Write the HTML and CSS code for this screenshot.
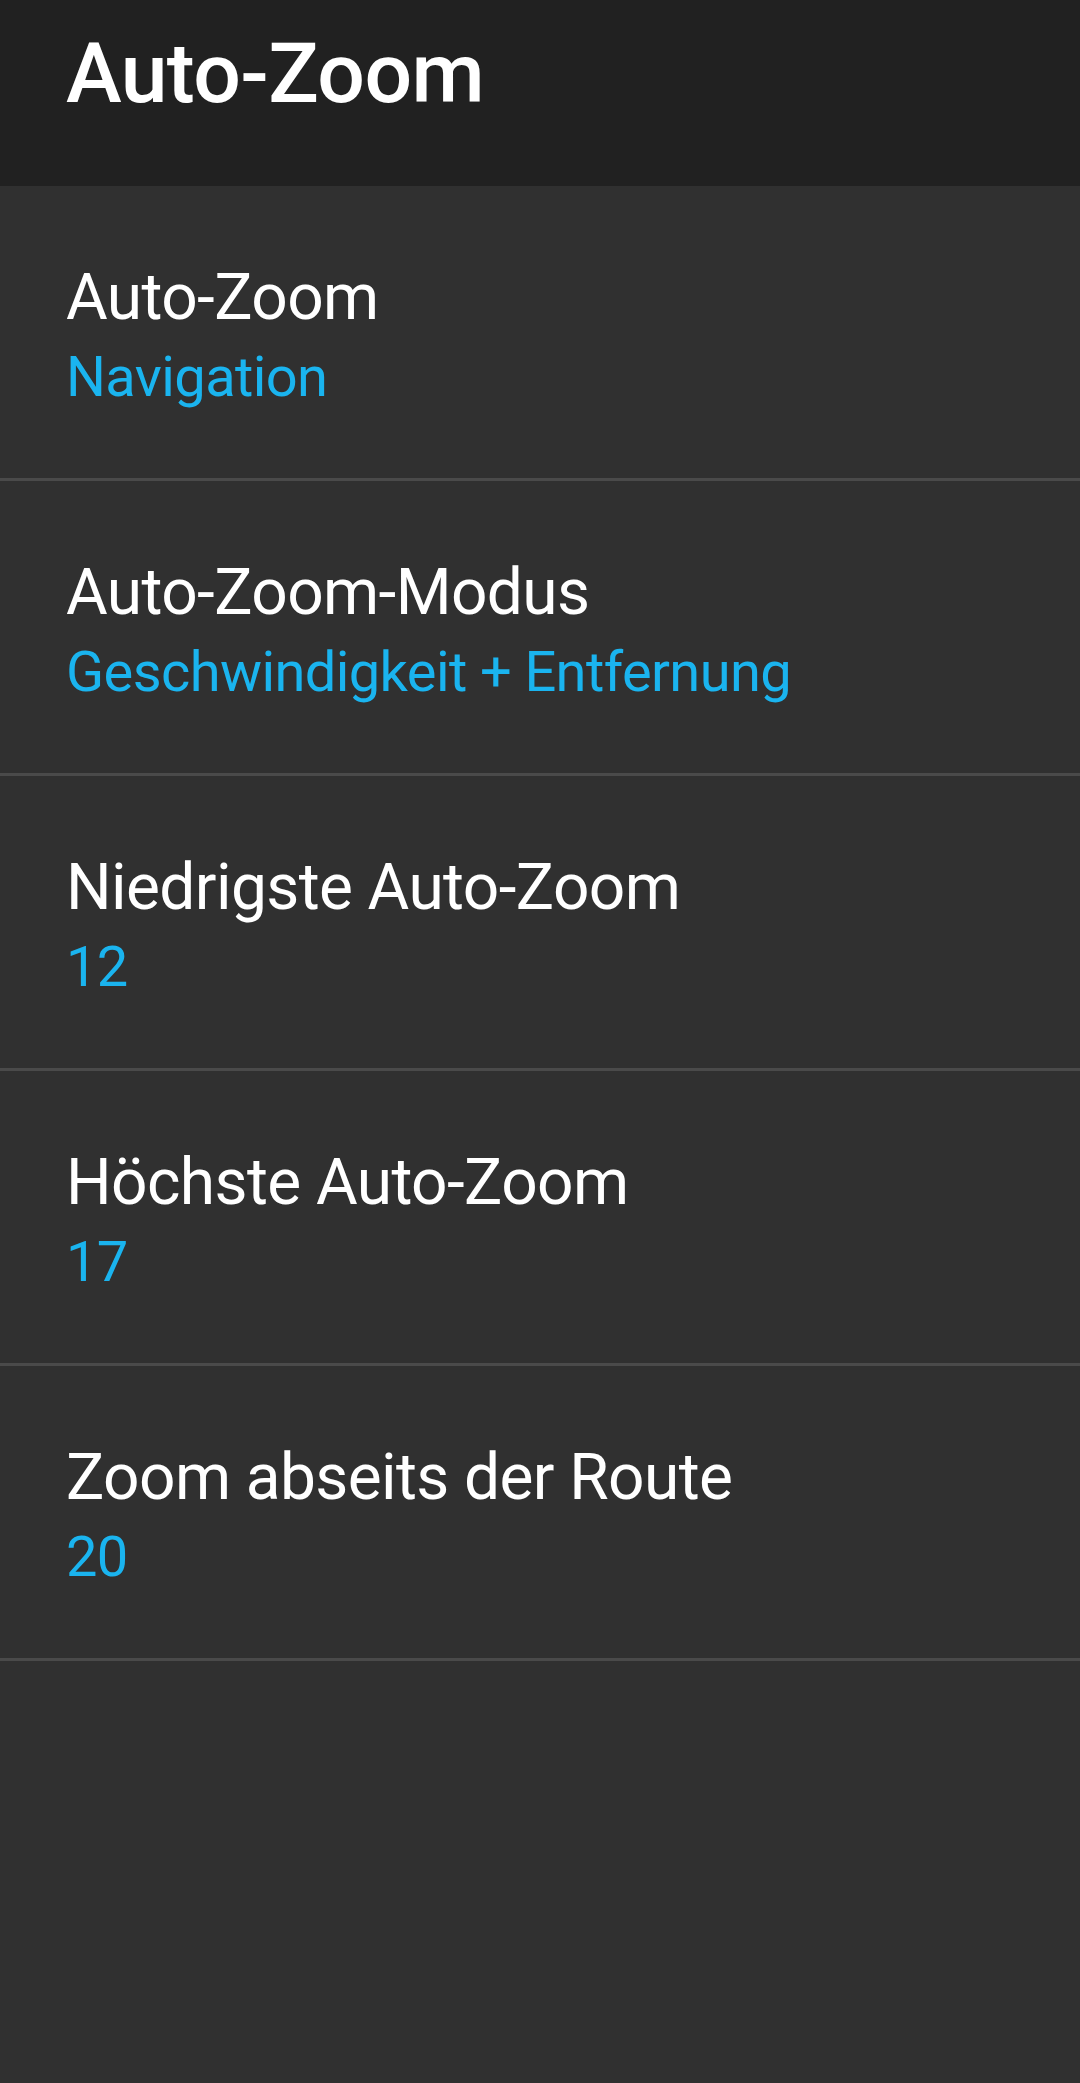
FILE: index.html
```html
<!DOCTYPE html>
<html lang="de">
<head>
  <meta charset="UTF-8">
  <meta name="viewport" content="width=device-width, initial-scale=1.0">
  <title>Auto-Zoom</title>
  <link rel="stylesheet" href="styles.css">
</head>
<body>
  <div class="toolbar">
    <h1>Auto-Zoom</h1>
  </div>

  <div class="pref-list">
    <div class="pref-item">
      <div class="pref-title">Auto-Zoom</div>
      <div class="pref-summary">Navigation</div>
    </div>
    <div class="pref-item">
      <div class="pref-title">Auto-Zoom-Modus</div>
      <div class="pref-summary">Geschwindigkeit + Entfernung</div>
    </div>
    <div class="pref-item">
      <div class="pref-title">Niedrigste Auto-Zoom</div>
      <div class="pref-summary">12</div>
    </div>
    <div class="pref-item">
      <div class="pref-title">Höchste Auto-Zoom</div>
      <div class="pref-summary">17</div>
    </div>
    <div class="pref-item">
      <div class="pref-title">Zoom abseits der Route</div>
      <div class="pref-summary">20</div>
    </div>
  </div>
</body>
</html>
```

FILE: styles.css
```css
html,
body {
  background-color: #303030;
}

body {
  font-family: Roboto, "Liberation Sans", sans-serif;
  margin: 0;
  padding: 0;
  min-height: 2083px;
}

.toolbar {
  background-color: #212121;
  height: 186px;
  box-sizing: border-box;
  padding: 25px 66px 0;
}

.toolbar h1 {
  margin: 0;
  color: #fff;
  font-size: 84px;
  font-weight: 500;
  line-height: 98px;
  letter-spacing: -0.6px;
}

.pref-item {
  padding: 74px 66px 68px;
  border-bottom: 3px solid #4a4a4a;
}

.pref-title {
  color: #fff;
  font-size: 64px;
  line-height: 75px;
  letter-spacing: -0.6px;
}

.pref-summary {
  margin-top: 9px;
  color: #1ab4ef;
  font-size: 56px;
  line-height: 66px;
  letter-spacing: -0.6px;
}
```
